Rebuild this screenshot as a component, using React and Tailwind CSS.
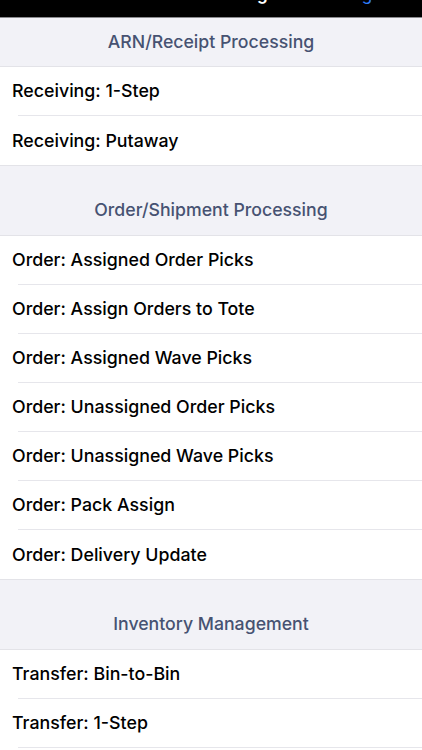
const sections = [
  {
    title: 'ARN/Receipt Processing',
    first: true,
    items: ['Receiving: 1-Step', 'Receiving: Putaway'],
  },
  {
    title: 'Order/Shipment Processing',
    items: [
      'Order: Assigned Order Picks',
      'Order: Assign Orders to Tote',
      'Order: Assigned Wave Picks',
      'Order: Unassigned Order Picks',
      'Order: Unassigned Wave Picks',
      'Order: Pack Assign',
      'Order: Delivery Update',
    ],
  },
  {
    title: 'Inventory Management',
    items: ['Transfer: Bin-to-Bin', 'Transfer: 1-Step', 'Transfer: Receive'],
  },
];

export default function App() {
  return (
    <div className="w-[422px] h-[750px] overflow-hidden bg-[#f2f2f7] font-['Inter','Liberation_Sans',sans-serif]">
      {/* top bar, title cut off above */}
      <div className="h-[18px] bg-black overflow-hidden border-b border-[#8a8a8e] flex items-end">
        <span className="ml-[257px] text-white text-[17px] font-semibold leading-none mb-[14px]">g</span>
        <span className="ml-[94px] text-[#2f7cf6] text-[17px] leading-none mb-[14px]">g</span>
      </div>

      {sections.map((s) => (
        <div key={s.title}>
          <div
            className={`flex items-end justify-center text-[17.7px] font-medium text-[#475272] border-b border-[#e3e3e8] ${
              s.first ? 'h-[49px] pb-[10px]' : 'h-[70px] pb-[11px]'
            }`}
          >
            {s.title}
          </div>
          <div className="bg-white border-b border-[#e3e3e8]">
            {s.items.map((item, i) => (
              <div key={item} className="pl-[18px]">
                <div
                  className={`h-[49px] flex items-center pt-[1px] text-[17.8px] font-medium text-black ${
                    i < s.items.length - 1 ? 'border-b border-[#e6e6eb]' : ''
                  }`}
                >
                  <span className="-ml-[6px]">{item}</span>
                </div>
              </div>
            ))}
          </div>
        </div>
      ))}
    </div>
  );
}
